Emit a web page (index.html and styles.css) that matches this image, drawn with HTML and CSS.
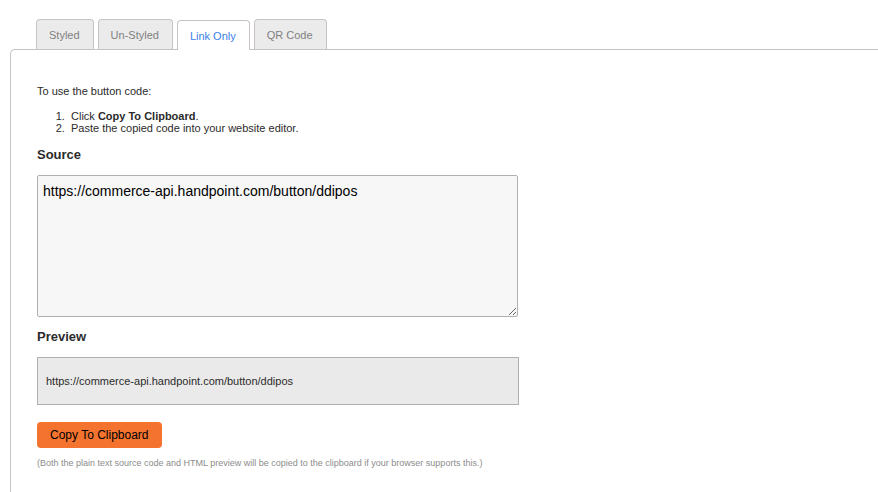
FILE: index.html
```html
<!DOCTYPE html>
<html lang="en">
<head>
<meta charset="utf-8">
<meta name="viewport" content="width=device-width, initial-scale=1">
<title>Button code</title>
<link rel="stylesheet" href="styles.css">
</head>
<body>
<div class="tabs" role="tablist">
  <button class="tab" type="button" role="tab" aria-selected="false">Styled</button>
  <button class="tab" type="button" role="tab" aria-selected="false">Un-Styled</button>
  <button class="tab tab-active" type="button" role="tab" aria-selected="true">Link Only</button>
  <button class="tab" type="button" role="tab" aria-selected="false">QR Code</button>
</div>
<main class="panel">
  <p class="intro">To use the button code:</p>
  <ol class="steps">
    <li>Click <strong>Copy To Clipboard</strong>.</li>
    <li>Paste the copied code into your website editor.</li>
  </ol>
  <h2 class="heading"><label for="source">Source</label></h2>
  <textarea class="source" id="source" spellcheck="false">https://commerce-api.handpoint.com/button/ddipos</textarea>
  <h2 class="heading">Preview</h2>
  <div class="preview">https://commerce-api.handpoint.com/button/ddipos</div>
  <button class="copy" type="button">Copy To Clipboard</button>
  <p class="note">(Both the plain text source code and HTML preview will be copied to the clipboard if your browser supports this.)</p>
</main>
</body>
</html>
```
FILE: styles.css
```css
@counter-style spaced-decimal {
  system: extends decimal;
  suffix: ".\00a0\00a0";
}

* {
  box-sizing: border-box;
}

html,
body {
  height: 100%;
}

body {
  display: flex;
  flex-direction: column;
  margin: 0;
  padding: 19px 0 0 10px;
  overflow: hidden;
  background: #fff;
  color: #2b2b2b;
  font: 11px/12px "Liberation Sans", Arial, sans-serif;
}

.tabs {
  display: flex;
  align-items: flex-end;
  gap: 4px;
  padding-left: 26px;
}

.tab {
  height: 30px;
  padding: 1px 13px 0 12px;
  border: 1px solid #c8c3c3;
  border-bottom: 0;
  border-radius: 4px 4px 0 0;
  background: #ebebeb;
  color: #808080;
  font: inherit;
}

.tab-active {
  z-index: 1;
  margin-bottom: -1px;
  background: #fff;
  color: #3b82e6;
}

.panel {
  flex: 1 0 auto;
  padding: 35px 26px 20px;
  border: 1px solid #c3c3c3;
  border-width: 1px 0 0 1px;
  border-top-left-radius: 5px;
}

.intro {
  margin: 0 0 13px;
}

.steps {
  margin: 0 0 13px;
  padding-left: 34px;
  list-style: spaced-decimal;
}

.heading {
  margin: 12px 0;
  font-size: 13px;
  line-height: 16px;
}

.source {
  display: block;
  width: 100%;
  max-width: 481px;
  height: 142px;
  padding: 7px 5px;
  border: 1px solid #b0b0b0;
  border-radius: 2px;
  background: #f7f7f7;
  color: #000;
  font: 14px/16px "Liberation Sans", Arial, sans-serif;
  resize: both;
}

.preview {
  max-width: 482px;
  padding: 17px 8px;
  border: 1px solid #b0b0b0;
  background: #eaeaea;
}

.copy {
  display: block;
  height: 26px;
  margin: 17px 0 9px;
  padding: 0 13px;
  border: 0;
  border-radius: 4px;
  background: #f4732f;
  color: #000;
  font: 12px/14px "Liberation Sans", Arial, sans-serif;
}

.note {
  margin: 0;
  color: #8c8c8c;
  font-size: 9px;
}
```
